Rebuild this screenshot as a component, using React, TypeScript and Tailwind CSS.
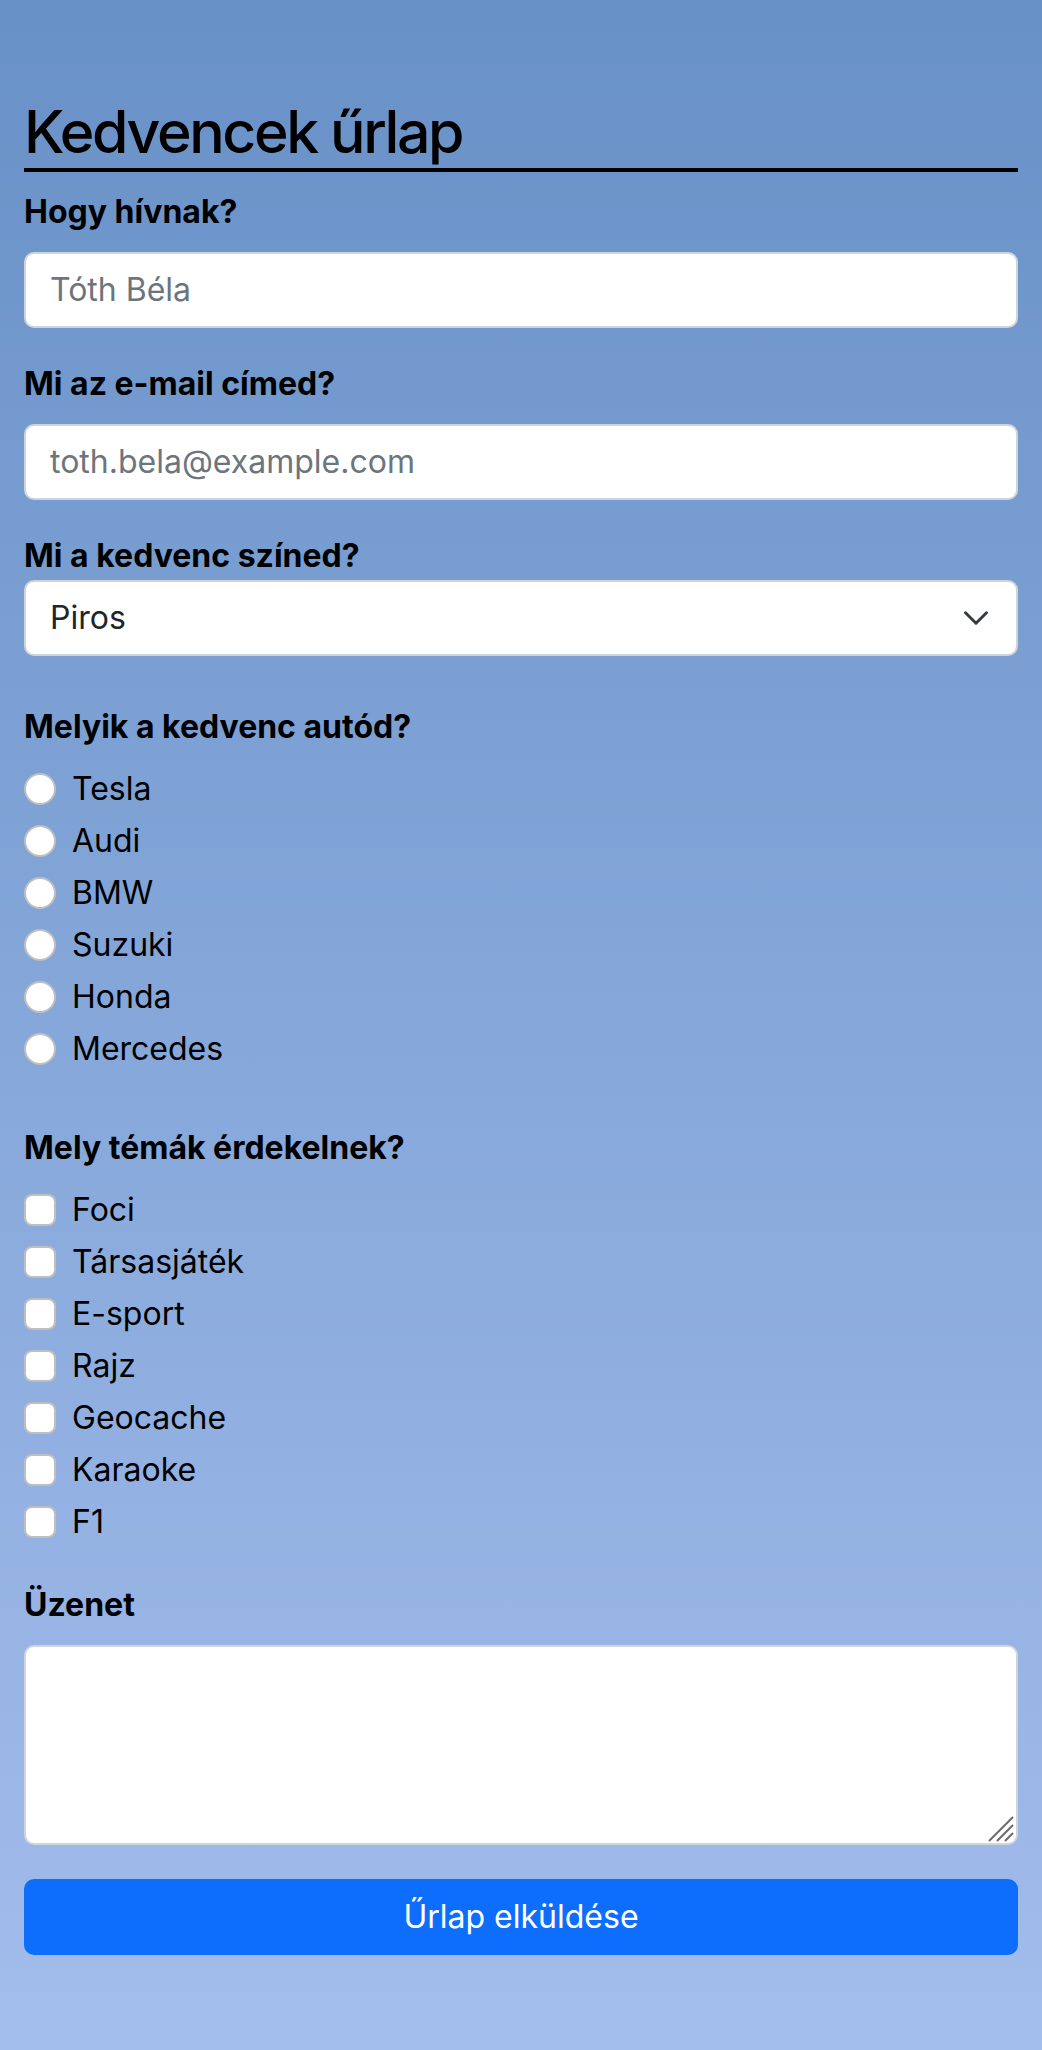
import React from 'react';

const cars = ['Tesla', 'Audi', 'BMW', 'Suzuki', 'Honda', 'Mercedes'];
const topics = ['Foci', 'Társasjáték', 'E-sport', 'Rajz', 'Geocache', 'Karaoke', 'F1'];

const App: React.FC = () => {
  return (
    <div className="min-h-[2050px] bg-linear-to-b from-[#6891c7] to-[#a3bdec] font-['Inter',sans-serif] text-black">
      <form className="px-6 pt-[97px] pb-12" onSubmit={e => e.preventDefault()}>
        <h1 className="text-[59px] leading-[1.2] font-medium tracking-[-2.4px] border-b-4 border-black mb-4">Kedvencek űrlap</h1>

        <label className="block text-[32px] leading-[48px] font-bold mb-4">Hogy hívnak?</label>
        <input
          type="text"
          placeholder="Tóth Béla"
          className="block w-full h-[76px] mb-8 px-6 bg-white border-2 border-[#ced4da] rounded-[10px] text-[32px] text-[#212529] placeholder:text-[#6c757d] outline-none"
        />

        <label className="block text-[32px] leading-[48px] font-bold mb-4">Mi az e-mail címed?</label>
        <input
          type="email"
          placeholder="toth.bela@example.com"
          className="block w-full h-[76px] mb-8 px-6 bg-white border-2 border-[#ced4da] rounded-[10px] text-[32px] text-[#212529] placeholder:text-[#6c757d] outline-none"
        />

        <label className="block text-[32px] leading-[48px] font-bold">Mi a kedvenc színed?</label>
        <div className="relative mb-[47px]">
          <select className="block w-full h-[76px] pl-6 pr-20 appearance-none bg-white border-2 border-[#ced4da] rounded-[10px] text-[32px] text-[#212529] outline-none">
            <option>Piros</option>
            <option>Zöld</option>
            <option>Kék</option>
            <option>Sárga</option>
          </select>
          <svg className="absolute right-[28px] top-1/2 -translate-y-1/2 pointer-events-none" width="28" height="28" viewBox="0 0 16 16" fill="none">
            <path d="M2 5l6 6 6-6" stroke="#343a40" strokeWidth="1.7" strokeLinecap="round" strokeLinejoin="round" />
          </svg>
        </div>

        <p className="text-[32px] leading-[48px] font-bold mb-[14px]">Melyik a kedvenc autód?</p>
        <div className="mb-[51px]">
          {cars.map(c => (
            <label key={c} className="flex items-start gap-4 h-12 mb-1 text-[32px] leading-[48px]">
              <input type="radio" name="car" className="appearance-none mt-2 w-8 h-8 shrink-0 rounded-full bg-white border-2 border-[#bfbfbf]" />
              <span>{c}</span>
            </label>
          ))}
        </div>

        <p className="text-[32px] leading-[48px] font-bold mb-[14px]">Mely témák érdekelnek?</p>
        <div className="mb-[35px]">
          {topics.map(t => (
            <label key={t} className="flex items-start gap-4 h-12 mb-1 text-[32px] leading-[48px]">
              <input type="checkbox" className="appearance-none mt-2 w-8 h-8 shrink-0 rounded-lg bg-white border-2 border-[#bfbfbf]" />
              <span>{t}</span>
            </label>
          ))}
        </div>

        <label className="block text-[32px] leading-[48px] font-bold mb-4">Üzenet</label>
        <div className="relative mb-[34px]">
          <textarea className="block w-full h-[200px] px-6 py-3 resize-none bg-white border-2 border-[#ced4da] rounded-[10px] text-[32px] text-[#212529] outline-none" />
          <svg className="absolute right-[4px] bottom-[3px] pointer-events-none" width="26" height="26" viewBox="0 0 26 26">
            <path d="M1 25L25 1M9 25L25 9M17 25L25 17" stroke="#6b6b6b" strokeWidth="2" />
          </svg>
        </div>

        <button type="submit" className="block w-full h-[76px] bg-[#0d6efd] text-white text-[32px] rounded-[10px]">
          Űrlap elküldése
        </button>
      </form>
    </div>
  );
};

export default App;
